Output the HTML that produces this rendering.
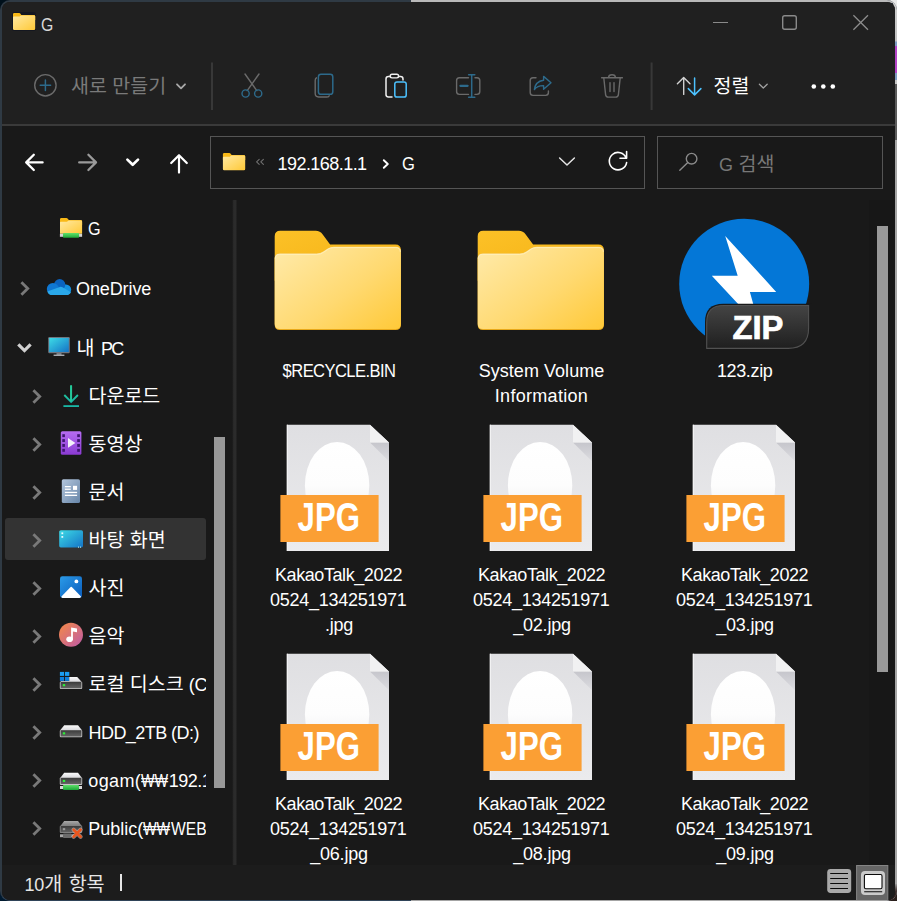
<!DOCTYPE html>
<html lang="ko">
<head>
<meta charset="utf-8">
<title>G</title>
<style>
*{box-sizing:border-box;margin:0;padding:0}
html,body{width:897px;height:901px;overflow:hidden;background:#00101b}
body{font-family:"Liberation Sans","Noto Sans CJK KR",sans-serif;color:#fff;position:relative}
.abs{position:absolute}
/* backdrop pieces (things behind the window) */
.cn{width:12px;height:12px}
#c-tl{left:0;top:0;background:#00101b}
#c-tr{right:0;top:0;background:#e8e8e8}
#c-bl{left:0;bottom:0;background:#001a30}
#c-br{right:0;bottom:0;background:#2a1f1c}
#frame{left:0;top:0;width:897px;height:901px;border-radius:10px;overflow:hidden;background:#2f3a44}
#f-top{left:411px;top:0;width:486px;height:3px;background:#b9b9b9}
#f-right{left:893px;top:0;width:4px;height:901px;background:linear-gradient(#d0d0d0 0,#c2c2c2 41px,#7f9cc4 42px,#7f9cc4 46px,#b545c8 46px,#b545c8 73px,#7f9cc4 73px,#7f9cc4 80px,#c8c8c8 80px,#c8c8c8 84px,#5c5c5c 84px,#5c5c5c 140px,#a6a6a6 140px)}
#f-bot{left:0;top:897px;width:411px;height:4px;background:#2f4358}
#f-bot2{left:411px;top:897px;width:486px;height:4px;background:#a4a4a4}
#f-brc{left:889px;top:884px;width:8px;height:17px;background:linear-gradient(#999,#3a2c2a 45%,#2a1a18)}
#win{left:2px;top:2px;width:893px;height:897.9px;background:#191919;border-radius:8px;overflow:hidden}
#head{left:0;top:0;width:893px;height:122px;background:#202020}
#headline{left:0;top:122px;width:893px;height:2px;background:#3a3a3a}
.t{white-space:nowrap;line-height:1}
.fl{font-size:18px;line-height:25px;height:25px;width:220px;text-align:center;color:#fff}
.nl{font-size:18px;line-height:24px;height:24px;color:#fff}
.k{font-size:19.5px}

</style>
</head>
<body>
<div class="abs cn" id="c-tl"></div><div class="abs cn" id="c-tr"></div><div class="abs cn" id="c-bl"></div><div class="abs cn" id="c-br"></div>
<div class="abs" id="frame">
  <div class="abs" id="f-top"></div>
  <div class="abs" id="f-right"></div>
  <div class="abs" id="f-bot"></div>
  <div class="abs" id="f-bot2"></div>
  <div class="abs" id="f-brc"></div>
</div>
<div class="abs" id="win">
  <div class="abs" id="head"></div>
  <div class="abs" id="headline"></div>
  <svg class="abs" style="left:10px;top:10px" width="24" height="19" viewBox="0 0 24 19">
    <defs>
      <linearGradient id="fg1" x1="0" y1="0" x2="1" y2="1"><stop offset="0" stop-color="#ffe9a2"/><stop offset="1" stop-color="#ffc937"/></linearGradient>
    </defs>
    <rect x="0" y="0" width="24" height="19" rx="2" fill="#0b1020" opacity=".55"/>
    <path d="M1 2.2 Q1 1 2.2 1 H7.2 Q8 1 8.5 1.8 L9.3 3 H22 Q23.2 3 23.2 4.2 V8 H1 Z" fill="#f9b917"/>
    <path d="M1 5.2 Q1 4.6 1.8 4.6 H7.6 L9 3.4 H22.4 Q23.2 3.4 23.2 4.2 V16.8 Q23.2 18 22 18 H2.2 Q1 18 1 16.8 Z" fill="url(#fg1)"/>
  </svg>
  <div class="abs t" style="left:38.8px;top:14px;font-size:18px;color:#d8d8d8;transform:scaleX(.88);transform-origin:0 50%">G</div>
  <!-- window controls -->
  <svg class="abs" style="left:700px;top:0" width="193" height="46" viewBox="0 0 193 46" fill="none" stroke="#8a8a8a" stroke-width="1.4">
    <path d="M11 20.5 H26" stroke-width="1.15"/>
    <rect x="80.7" y="13.7" width="13.6" height="13.6" rx="2"/>
    <path d="M151.4 13.2 L166 27.8 M166 13.2 L151.4 27.8" stroke-width="1.3"/>
  </svg>

  <!-- toolbar; coordinates are window-relative (abs-2) -->
  <svg class="abs" style="left:0;top:46px" width="893" height="76" viewBox="2 48 893 76" fill="none" stroke-linecap="round" stroke-linejoin="round">
    <!-- new -->
    <circle cx="45.4" cy="85.3" r="10.7" stroke="#6a6a6a" stroke-width="1.4"/>
    <path d="M40.2 85.3 H50.6 M45.4 80.1 V90.5" stroke="#2d6a8b" stroke-width="1.5"/>
    <path d="M177 84.3 L181 88.3 L185 84.3" stroke="#a8a8a8" stroke-width="1.8"/>
    <!-- sep -->
    <path d="M212 62.6 V110" stroke="#383838" stroke-width="2" stroke-linecap="butt"/>
    <!-- cut -->
    <path d="M245 74 L256.8 90.6 M259 74 L247.2 90.6" stroke="#6a6a6a" stroke-width="1.4"/>
    <circle cx="245.6" cy="93.5" r="3.6" stroke="#2d6a8b" stroke-width="1.4"/>
    <circle cx="258.2" cy="93.5" r="3.6" stroke="#2d6a8b" stroke-width="1.4"/>
    <!-- copy -->
    <path d="M316.4 77.8 Q315.2 78.6 315.2 80.4 V93.6 Q315.2 97 318.6 97 H326.6 Q328.4 97 329.2 95.8" stroke="#6a6a6a" stroke-width="1.4"/>
    <rect x="318.4" y="74.3" width="14.4" height="20" rx="2.6" stroke="#2d6a8b" stroke-width="1.5"/>
    <!-- paste -->
    <path d="M390 76.6 H388.4 Q386 76.6 386 79 V94.6 Q386 97 388.4 97 H392 M398.6 76.6 H400.6 Q403 76.6 403 79 V80" stroke="#f0f0f0" stroke-width="1.5"/>
    <rect x="390.2" y="74.3" width="8.4" height="3.6" rx="1.8" stroke="#f0f0f0" stroke-width="1.4"/>
    <rect x="394.8" y="81.9" width="11.4" height="15.2" rx="2.2" stroke="#4cc2ff" stroke-width="1.5"/>
    <!-- rename -->
    <path d="M468.5 77.8 H459.4 Q456.6 77.8 456.6 80.6 V91.6 Q456.6 94.4 459.4 94.4 H468.5 M475 77.8 H477 Q479.8 77.8 479.8 80.6 V91.6 Q479.8 94.4 477 94.4 H475" stroke="#6a6a6a" stroke-width="1.4"/>
    <path d="M471.7 74.8 V97.2 M468.6 74.8 H474.8 M468.6 97.2 H474.8" stroke="#2d6a8b" stroke-width="1.5"/>
    <path d="M460.4 85.8 H467.6" stroke="#2d6a8b" stroke-width="2.2"/>
    <!-- share -->
    <path d="M536 77.8 H533 Q530.2 77.8 530.2 80.6 V92.6 Q530.2 95.4 533 95.4 H545.6 Q548.4 95.4 548.4 92.6 V91" stroke="#6a6a6a" stroke-width="1.4"/>
    <path d="M543.6 76.4 L551 82.8 L543.6 89.2 V85.6 Q537.4 85.4 534.4 89.6 Q535.2 81.4 543.6 80.2 Z" stroke="#2d6a8b" stroke-width="1.4"/>
    <!-- delete -->
    <path d="M601.6 77.7 H622.4 M608.6 77.4 Q608.6 74.7 612 74.7 Q615.4 74.7 615.4 77.4 M603.8 78 L605.6 94.6 Q605.9 97.1 608.4 97.1 H615.6 Q618.1 97.1 618.4 94.6 L620.2 78 M610 82.6 V91.6 M614 82.6 V91.6" stroke="#6a6a6a" stroke-width="1.4"/>
    <!-- sep -->
    <path d="M651.6 62.6 V110" stroke="#383838" stroke-width="2" stroke-linecap="butt"/>
    <!-- sort -->
    <path d="M683.7 94.4 V78 M677.4 83.8 L683.7 77.5 L690 83.8" stroke="#d0d0d0" stroke-width="1.4"/>
    <path d="M694.6 78 V94.4 M688.3 88.6 L694.6 94.9 L700.9 88.6" stroke="#4cc2ff" stroke-width="1.5"/>
    <path d="M759.4 84.2 L763.3 88 L767.2 84.2" stroke="#a0a0a0" stroke-width="1.3"/>
    <!-- more -->
    <g fill="#fff" stroke="none"><circle cx="813.8" cy="86.5" r="2.3"/><circle cx="823.3" cy="86.5" r="2.3"/><circle cx="832.8" cy="86.5" r="2.3"/></g>
  </svg>
  <div class="abs t" style="left:69px;top:74.5px;font-size:19.5px;color:#7a7a7a">새로 만들기</div>
  <div class="abs t" style="left:711.5px;top:74.5px;font-size:19.5px;color:#fff">정렬</div>

  <!-- address row -->
  <div class="abs" style="left:208px;top:134px;width:435px;height:53px;border:1px solid #555"></div>
  <div class="abs" style="left:655px;top:134px;width:226px;height:53px;border:1px solid #555"></div>
  <svg class="abs" style="left:0;top:124px" width="893" height="74" viewBox="2 126 893 74" fill="none" stroke-linecap="round" stroke-linejoin="round">
    <defs><linearGradient id="fg2" x1="0" y1="0" x2="1" y2="1"><stop offset="0" stop-color="#ffe9a2"/><stop offset="1" stop-color="#ffc937"/></linearGradient></defs>
    <path d="M26.4 162.4 H42.6 M33.8 154.8 L26.2 162.4 L33.8 170" stroke="#fff" stroke-width="2.3"/>
    <path d="M79.2 162.4 H95.6 M88.4 154.8 L96 162.4 L88.4 170" stroke="#9a9a9a" stroke-width="2.3"/>
    <path d="M127.4 159.6 L132.7 164.8 L138 159.6" stroke="#fff" stroke-width="2.7"/>
    <path d="M179 172.6 V155.4 M171.2 163 L179 155.2 L186.8 163" stroke="#fff" stroke-width="2.2"/>
    <!-- folder -->
    <path d="M222.9 154.3 Q222.9 152.9 224.3 152.9 H229.3 Q230.1 152.9 230.7 153.7 L231.6 155 H243.9 Q245.2 155 245.2 156.3 V160 H222.9 Z" fill="#f9b917"/>
    <path d="M222.9 157.6 Q222.9 156.8 223.7 156.8 H229.8 L231.3 155.5 H244.3 Q245.2 155.5 245.2 156.4 V168.9 Q245.2 170.2 243.9 170.2 H224.2 Q222.9 170.2 222.9 168.9 Z" fill="url(#fg2)"/>
    <!-- « -->
    <path d="M259.2 159.3 L256.6 161.8 L259.2 164.3 M263.4 159.3 L260.8 161.8 L263.4 164.3" stroke="#707070" stroke-width="1.1"/>
    <!-- › -->
    <path d="M383.8 160.2 L387.8 164 L383.8 167.8" stroke="#fff" stroke-width="1.9"/>
    <!-- dropdown -->
    <path d="M559.6 158 L567 165 L574.4 158" stroke="#e4e4e4" stroke-width="1.5"/>
    <!-- refresh -->
    <path d="M626.2 158.2 A8.7 8.7 0 1 0 626.6 162.6 M626.6 151.6 V158.2 H620" stroke="#fff" stroke-width="1.6"/>
    <!-- search -->
    <circle cx="691.6" cy="158.7" r="5.3" stroke="#8a8a8a" stroke-width="1.4"/>
    <path d="M687.8 162.5 L679.8 170.2" stroke="#8a8a8a" stroke-width="1.4"/>
  </svg>
  <div class="abs t" style="left:275.5px;top:153px;font-size:18px;color:#fff;letter-spacing:-0.55px">192.168.1.1</div>
  <div class="abs t" style="left:400px;top:153px;font-size:18px;color:#fff;transform:scaleX(.92);transform-origin:0 50%">G</div>
  <div class="abs t" style="left:717px;top:153px;font-size:18px;color:#777"><span style="letter-spacing:-1px">G</span><span style="font-size:19.5px;margin-left:6.5px">검색</span></div>

  <!-- nav pane -->
<div class="abs" style="left:3.3px;top:516.2px;width:200.8px;height:41.4px;background:#333;border-radius:3px"></div>
<div class="abs" style="left:212.3px;top:434.6px;width:10.6px;height:351.2px;background:#989898"></div>
<div class="abs" style="left:230.1px;top:198px;width:5.2px;height:665px;background:linear-gradient(to right,#171717,#2b2b2b 35%,#2b2b2b 70%,#1d1d1d)"></div>
<svg class="abs" style="left:0;top:198px" width="232" height="665" viewBox="2 200 232 665">
<defs>
<linearGradient id="nfg" x1="0" y1="0" x2="1" y2="1"><stop offset="0" stop-color="#ffe9a2"/><stop offset="1" stop-color="#ffc937"/></linearGradient>
<linearGradient id="gcy" x1="0" y1="0" x2="1" y2="1"><stop offset="0" stop-color="#3ddbe6"/><stop offset="1" stop-color="#1473c6"/></linearGradient>
<linearGradient id="gdl" x1="0" y1="0" x2="0" y2="1"><stop offset="0" stop-color="#2ad08c"/><stop offset="1" stop-color="#19b6a8"/></linearGradient>
<linearGradient id="gvid" x1="0" y1="0" x2="0" y2="1"><stop offset="0" stop-color="#b66cf2"/><stop offset="1" stop-color="#8a3ad2"/></linearGradient>
<linearGradient id="gdoc" x1="0" y1="0" x2="1" y2="1"><stop offset="0" stop-color="#b4c6dc"/><stop offset="1" stop-color="#6685a8"/></linearGradient>
<linearGradient id="gph" x1="0" y1="0" x2="1" y2="1"><stop offset="0" stop-color="#2b9be8"/><stop offset="1" stop-color="#0a5cbc"/></linearGradient>
<linearGradient id="gmu" x1="0" y1="0" x2="1" y2="1"><stop offset="0" stop-color="#f58a45"/><stop offset="1" stop-color="#bd5aa8"/></linearGradient>
<linearGradient id="gdrvT" x1="0" y1="0" x2="0" y2="1"><stop offset="0" stop-color="#fafafa"/><stop offset="1" stop-color="#dadade"/></linearGradient>
<linearGradient id="gdrvF" x1="0" y1="0" x2="0" y2="1"><stop offset="0" stop-color="#3c3c3c"/><stop offset="1" stop-color="#646464"/></linearGradient>
<linearGradient id="gdrvT2" x1="0" y1="0" x2="0" y2="1"><stop offset="0" stop-color="#a8a8a8"/><stop offset="1" stop-color="#7c7c7c"/></linearGradient>
<linearGradient id="ggr" x1="0" y1="0" x2="0" y2="1"><stop offset="0" stop-color="#5fe06a"/><stop offset="1" stop-color="#1fa83a"/></linearGradient>
<linearGradient id="god1" x1="0" y1="0" x2="1" y2="1"><stop offset="0" stop-color="#0f6cbd"/><stop offset="1" stop-color="#0a4f9c"/></linearGradient>
</defs>
<path d="M60 219.3 Q60 217.9 61.4 217.9 H66.4 Q67.2 217.9 67.8 218.7 L68.8 220 H80.8 Q82.1 220 82.1 221.4 V225 H60 Z" fill="#f9b917"/>
<path d="M60 222.6 Q60 221.8 60.8 221.8 H67 L68.6 220.5 H81.2 Q82.1 220.5 82.1 221.5 V233.8 H60 Z" fill="url(#nfg)"/>
<rect x="59.9" y="233.8" width="22.2" height="3" fill="#d4d4d4"/><rect x="63" y="233.1" width="16.1" height="4.7" rx="0.8" fill="url(#ggr)"/>
<path d="M21.40 282.30 L27.70 288.50 L21.40 294.70" stroke="#797979" stroke-width="2.8" fill="none"/>
<path d="M57 284.6 H66 A5.2 5.2 0 0 1 66 295 H57 Z" fill="#1490df"/>
<circle cx="59.7" cy="284.6" r="5.6" fill="#0a63c0"/>
<circle cx="52.9" cy="289" r="6.1" fill="#0f78d4"/>
<path d="M47.3 291.4 L59.8 286.9 Q61.2 286.4 62.5 287.2 L70.9 292.2 Q69.8 295 66.4 295 H52.4 Q48.4 295 47.3 291.4 Z" fill="#2aa8ea"/>
<path d="M18.30 344.40 L24.45 350.60 L30.60 344.40" stroke="#d0d0d0" stroke-width="3.2" fill="none"/>
<rect x="48.2" y="337" width="21.6" height="16.2" rx="1.2" fill="#6f7680"/><rect x="49.2" y="338" width="19.6" height="14" fill="url(#gcy)"/><rect x="56.5" y="353.2" width="5" height="1.6" fill="#8b9197"/><rect x="53.6" y="354.6" width="10.8" height="1.3" fill="#b5bac0"/>
<path d="M33.40 390.30 L39.70 396.50 L33.40 402.70" stroke="#797979" stroke-width="2.8" fill="none"/>
<path d="M71.1 385.4 V401.6 M64.3 395 L71.1 401.8 L77.9 395" stroke="url(#gdl)" stroke-width="1.9" fill="none"/><path d="M71.1 385.4 V401.6" stroke="#24c89a" stroke-width="1.9"/><rect x="63.4" y="405.2" width="15.6" height="1.8" fill="#19b8a6"/>
<path d="M33.40 438.30 L39.70 444.50 L33.40 450.70" stroke="#797979" stroke-width="2.8" fill="none"/>
<rect x="60.8" y="431.2" width="20.6" height="23.6" rx="1.6" fill="url(#gvid)"/>
<rect x="62.3" y="434.2" width="2.6" height="2.9" fill="#3f1670"/><rect x="77.2" y="434.2" width="2.7" height="2.9" fill="#3f1670"/>
<rect x="62.3" y="439.1" width="2.6" height="2.9" fill="#3f1670"/><rect x="77.2" y="439.1" width="2.7" height="2.9" fill="#3f1670"/>
<rect x="62.3" y="444.0" width="2.6" height="2.9" fill="#3f1670"/><rect x="77.2" y="444.0" width="2.7" height="2.9" fill="#3f1670"/>
<rect x="62.3" y="448.9" width="2.6" height="2.9" fill="#3f1670"/><rect x="77.2" y="448.9" width="2.7" height="2.9" fill="#3f1670"/>
<path d="M68 438 L75.4 442.9 L68 447.8 Z" fill="#f4f0fa"/>
<path d="M33.40 486.30 L39.70 492.50 L33.40 498.70" stroke="#797979" stroke-width="2.8" fill="none"/>
<rect x="61.8" y="479.2" width="18.2" height="23.8" rx="1.6" fill="url(#gdoc)"/><rect x="64.9" y="486" width="5.9" height="1.3" fill="#fff"/><rect x="64.9" y="488.6" width="5.9" height="1.3" fill="#fff"/><rect x="64.9" y="491.8" width="12.2" height="1.3" fill="#fff"/><rect x="64.9" y="494.7" width="12.2" height="1.3" fill="#fff"/><rect x="73" y="485.8" width="4.1" height="4.1" fill="#fff"/>
<path d="M33.40 534.30 L39.70 540.50 L33.40 546.70" stroke="#797979" stroke-width="2.8" fill="none"/>
<rect x="59.2" y="530.2" width="23.8" height="17.2" rx="1.6" fill="url(#gcy)"/><rect x="61.4" y="532.4" width="1.8" height="1.8" fill="#e8fbff"/><rect x="61.4" y="536" width="1.8" height="1.8" fill="#e8fbff"/><rect x="78" y="546.6" width="1" height="1" fill="#cfe"/><rect x="80" y="546.6" width="1" height="1" fill="#cfe"/>
<path d="M33.40 582.30 L39.70 588.50 L33.40 594.70" stroke="#797979" stroke-width="2.8" fill="none"/>
<rect x="60" y="576.2" width="22" height="21.8" rx="2.4" fill="url(#gph)"/><path d="M61.4 596.4 L70.6 587 Q71.2 586.4 71.8 587 L81 596.4 Q80.6 598 79.4 598 H62.6 Q61.6 598 61.4 596.4 Z" fill="#fff"/><circle cx="76.4" cy="581.4" r="1.9" fill="#fff"/>
<path d="M33.40 630.30 L39.70 636.50 L33.40 642.70" stroke="#797979" stroke-width="2.8" fill="none"/>
<circle cx="71" cy="634.8" r="12" fill="url(#gmu)"/><path d="M71.1 627.6 L77 628.4 V632.2 L72.9 631.4 V639.6 H71.1 Z" fill="#fff"/><ellipse cx="69.6" cy="639.3" rx="3.3" ry="2.8" fill="#fff"/>
<path d="M33.40 678.30 L39.70 684.50 L33.40 690.70" stroke="#797979" stroke-width="2.8" fill="none"/>
<rect x="59.9" y="671.9" width="4.2" height="4" fill="#1b9df2"/><rect x="65" y="671.9" width="4.3" height="4" fill="#1b9df2"/><rect x="59.9" y="677" width="4.2" height="3.9" fill="#0f7fdc"/><rect x="65" y="677" width="4.3" height="3.9" fill="#0f7fdc"/><path d="M69.3 677 H77.2 L81.6 681.8 H60.4 L61 680.9 H69.3 Z" fill="url(#gdrvT)"/><rect x="59.8" y="681.7" width="22.4" height="7.4" rx="1" fill="#c4c4c4"/><rect x="60.6" y="682.1" width="20.8" height="6.2" rx="0.5" fill="url(#gdrvF)"/><rect x="62.8" y="684.1" width="2.4" height="2.1" fill="#2ef03a"/>
<path d="M33.40 726.30 L39.70 732.50 L33.40 738.70" stroke="#797979" stroke-width="2.8" fill="none"/>
<path d="M64.2 725.2 H78 L81.8 730.1 H60.4 Z" fill="url(#gdrvT)"/><rect x="59.8" y="729.9000000000001" width="22.4" height="7.4" rx="1" fill="#c4c4c4"/><rect x="60.6" y="730.3000000000001" width="20.8" height="6.2" rx="0.5" fill="url(#gdrvF)"/><rect x="62.8" y="732.3000000000001" width="2.4" height="2.1" fill="#2ef03a"/>
<path d="M33.40 774.30 L39.70 780.50 L33.40 786.70" stroke="#797979" stroke-width="2.8" fill="none"/>
<path d="M64.2 772.8 H78 L81.8 777.6999999999999 H60.4 Z" fill="url(#gdrvT)"/><rect x="59.8" y="777.5" width="22.4" height="7.4" rx="1" fill="#c4c4c4"/><rect x="60.6" y="777.9" width="20.8" height="6.2" rx="0.5" fill="url(#gdrvF)"/><rect x="62.8" y="779.9" width="2.4" height="2.1" fill="#2ef03a"/>
<rect x="60" y="786" width="22" height="3" fill="#d6d6d6"/><rect x="63" y="785" width="16" height="4.9" rx="0.8" fill="url(#ggr)"/>
<path d="M33.40 822.30 L39.70 828.50 L33.40 834.70" stroke="#797979" stroke-width="2.8" fill="none"/>
<path d="M64.2 821 H78 L81.8 825.9 H60.4 Z" fill="url(#gdrvT2)"/><rect x="59.8" y="825.7" width="22.4" height="7.4" rx="1" fill="#8a8a8a"/><rect x="60.6" y="826.1" width="20.8" height="6.2" rx="0.5" fill="url(#gdrvF)"/><rect x="62.8" y="828.1" width="2.4" height="2.1" fill="#9a9a9a"/>
<rect x="60" y="834.3" width="14" height="2.9" fill="#a8a8a8"/><rect x="63" y="833.4" width="8.6" height="4.5" rx="0.8" fill="#6c6c6c"/>
<path d="M73.6 829.8 L80.6 836.8 M80.6 829.8 L73.6 836.8" stroke="#d8d0cc" stroke-width="4.2" fill="none" stroke-linecap="round" opacity=".55"/>
<path d="M73.6 829.8 L80.6 836.8 M80.6 829.8 L73.6 836.8" stroke="#e8561e" stroke-width="2.7" fill="none" stroke-linecap="round"/>
</svg>
<div class="abs t nl" style="left:85.6px;top:215.3px;transform:scaleX(.9);transform-origin:0 50%">G</div>
<div class="abs t nl" style="left:74px;top:274.7px;letter-spacing:-0.1px">OneDrive</div>
<div class="abs t nl" style="left:74.5px;top:333.6px;"><span class="k">내</span> <span style="letter-spacing:-1.7px;margin-left:1.6px">PC</span></div>
<div class="abs t nl" style="left:86.5px;top:382.3px;"><span class="k">다운로드</span></div>
<div class="abs t nl" style="left:86.5px;top:430.3px;"><span class="k">동영상</span></div>
<div class="abs t nl" style="left:86.5px;top:478.3px;"><span class="k">문서</span></div>
<div class="abs t nl" style="left:86.5px;top:526px;"><span class="k">바탕 화면</span></div>
<div class="abs t nl" style="left:86.5px;top:574px;"><span class="k">사진</span></div>
<div class="abs t nl" style="left:86.5px;top:622px;"><span class="k">음악</span></div>
<div class="abs t nl" style="left:86.5px;top:670.3px;width:117.5px;overflow:hidden"><span class="k">로컬 디스크</span> (C:)</div>
<div class="abs t nl" style="left:86.5px;top:719.3px;letter-spacing:-0.55px">HDD_2TB (D:)</div>
<div class="abs t nl" style="left:86.3px;top:767.3px;width:117.7px;overflow:hidden"><span style="letter-spacing:0.35px">ogam(</span><span style="display:inline-block;width:27.6px;letter-spacing:0;transform:scaleX(.8);transform-origin:0 50%">₩₩</span><span style="letter-spacing:-0.5px">192.168.1.1</span></div>
<div class="abs t nl" style="left:86.3px;top:815.3px;width:117.7px;overflow:hidden"><span style="letter-spacing:0px">Public(</span><span style="display:inline-block;width:27.6px;letter-spacing:0;transform:scaleX(.8);transform-origin:0 50%">₩₩</span><span style="display:inline-block;transform:scaleX(.87);transform-origin:0 50%">WEB</span></div>
  <!-- main pane -->
<div class="abs" style="left:867px;top:198px;width:26px;height:665px;background:#171717"></div>
<div class="abs" style="left:875px;top:224px;width:11.2px;height:446px;background:#999"></div>
<svg class="abs" style="left:272px;top:228px" width="128" height="101" viewBox="0 0 128 101"><g transform="translate(0.70 0.80)">
<defs><linearGradient id="ff274" x1="0" y1="0.1" x2="1" y2="1"><stop offset="0" stop-color="#ffe9a6"/><stop offset=".55" stop-color="#ffd970"/><stop offset="1" stop-color="#ffc938"/></linearGradient>
<linearGradient id="fb274" x1="0" y1="0" x2="1" y2="1"><stop offset="0" stop-color="#fcc127"/><stop offset="1" stop-color="#f3b013"/></linearGradient></defs>
<path d="M0 5.5 Q0 0 5.5 0 H41 Q45.4 0 48 3.6 L55.4 13.6 H120.6 Q126.2 13.6 126.2 19.2 V50 H0 Z" fill="url(#fb274)"/>
<path d="M0 28 Q0 22.8 5 22.8 H42 Q45.6 22.8 48.4 20.8 L53 17.6 Q55.6 16 59 16 H121.2 Q126.2 16 126.2 21 V94 Q126.2 99.2 121 99.2 H5.2 Q0 99.2 0 94 Z" fill="#e9a91a"/>
<path d="M0 28 Q0 22.8 5 22.8 H42 Q45.6 22.8 48.4 20.8 L53 17.6 Q55.6 16 59 16 H121.2 Q126.2 16 126.2 21 V93 Q126.2 98.2 121 98.2 H5.2 Q0 98.2 0 93 Z" fill="url(#ff274)"/>
<path d="M0.6 28 Q0.6 23.6 5 23.6 H42 Q46 23.6 48.8 21.6 L53.4 18.4 Q55.8 16.8 59 16.8 H121.2 Q125.6 16.8 125.6 21" stroke="#fff2c4" stroke-width="1" fill="none" opacity=".7"/>
</g></svg>
<svg class="abs" style="left:475px;top:228px" width="128" height="101" viewBox="0 0 128 101"><g transform="translate(0.70 0.80)">
<defs><linearGradient id="ff477" x1="0" y1="0.1" x2="1" y2="1"><stop offset="0" stop-color="#ffe9a6"/><stop offset=".55" stop-color="#ffd970"/><stop offset="1" stop-color="#ffc938"/></linearGradient>
<linearGradient id="fb477" x1="0" y1="0" x2="1" y2="1"><stop offset="0" stop-color="#fcc127"/><stop offset="1" stop-color="#f3b013"/></linearGradient></defs>
<path d="M0 5.5 Q0 0 5.5 0 H41 Q45.4 0 48 3.6 L55.4 13.6 H120.6 Q126.2 13.6 126.2 19.2 V50 H0 Z" fill="url(#fb477)"/>
<path d="M0 28 Q0 22.8 5 22.8 H42 Q45.6 22.8 48.4 20.8 L53 17.6 Q55.6 16 59 16 H121.2 Q126.2 16 126.2 21 V94 Q126.2 99.2 121 99.2 H5.2 Q0 99.2 0 94 Z" fill="#e9a91a"/>
<path d="M0 28 Q0 22.8 5 22.8 H42 Q45.6 22.8 48.4 20.8 L53 17.6 Q55.6 16 59 16 H121.2 Q126.2 16 126.2 21 V93 Q126.2 98.2 121 98.2 H5.2 Q0 98.2 0 93 Z" fill="url(#ff477)"/>
<path d="M0.6 28 Q0.6 23.6 5 23.6 H42 Q46 23.6 48.8 21.6 L53.4 18.4 Q55.8 16.8 59 16.8 H121.2 Q125.6 16.8 125.6 21" stroke="#fff2c4" stroke-width="1" fill="none" opacity=".7"/>
</g></svg>
<svg class="abs" style="left:674px;top:212px" width="138" height="140" viewBox="676 214 138 140">
<defs><linearGradient id="zl" x1="0" y1="0" x2="0" y2="1"><stop offset="0" stop-color="#444"/><stop offset="1" stop-color="#1f1f1f"/></linearGradient></defs>
<circle cx="744.2" cy="283.7" r="65" fill="#0477d7"/>
<path d="M725.2 235.9 L776.2 291.9 H749.9 L756 314 L740 306 L711.8 275.7 H737.7 Z" fill="#fff"/>
<path d="M705 352 V322 Q705 303.8 723.2 303.8 H812 V352 Z" fill="#191919"/>
<path d="M706.7 348.4 V322.4 Q706.7 305.5 723.6 305.5 H808.6 V328 Q808.6 348.4 788.2 348.4 Z" fill="url(#zl)" stroke="#515151" stroke-width="1.1"/>
<text x="757.9" y="339.1" text-anchor="middle" font-family="'Liberation Sans',sans-serif" font-weight="bold" font-size="33.4" fill="#fff" stroke="#fff" stroke-width="0.7" textLength="51" lengthAdjust="spacingAndGlyphs">ZIP</text>
</svg>
<svg class="abs" style="left:278px;top:422px" width="111" height="129" viewBox="0 0 111 129"><g transform="translate(0.40 0.70)">
<defs><linearGradient id="pg1" x1="0" y1="0" x2="0" y2="1"><stop offset="0" stop-color="#dfdfe2"/><stop offset="1" stop-color="#ebebed"/></linearGradient>
<linearGradient id="eg1" x1="0" y1="0" x2="0" y2="1"><stop offset="0" stop-color="#fff"/><stop offset=".5" stop-color="#fdfdfd"/><stop offset="1" stop-color="#e9e9ea"/></linearGradient>
<linearGradient id="sh1" x1="0" y1="0" x2="0" y2="1"><stop offset="0" stop-color="#c6c6cc"/><stop offset="1" stop-color="#dcdce0"/></linearGradient></defs>
<path d="M6.4 0 H89.6 L108.6 17.9 V126.3 H6.4 Z" fill="url(#pg1)"/>
<path d="M6.4 0 H7.6 V126.3 H6.4 Z" fill="#f2f2f3"/>
<path d="M89.6 17.9 H108.6 V36.6 Z" fill="url(#sh1)"/>
<path d="M89.6 0 L108.6 17.9 H89.6 Z" fill="#f1f1f2"/>
<ellipse cx="56.7" cy="60.6" rx="32.2" ry="43.4" fill="url(#eg1)"/>
<rect x="0" y="70.3" width="98.2" height="47" fill="#fb9f34"/>
<text x="48.4" y="106.5" text-anchor="middle" font-family="'Liberation Sans',sans-serif" font-weight="bold" font-size="40.6" fill="#fff" textLength="62.4" lengthAdjust="spacingAndGlyphs">JPG</text>
</g></svg>
<svg class="abs" style="left:481px;top:422px" width="111" height="129" viewBox="0 0 111 129"><g transform="translate(0.40 0.70)">
<defs><linearGradient id="pg2" x1="0" y1="0" x2="0" y2="1"><stop offset="0" stop-color="#dfdfe2"/><stop offset="1" stop-color="#ebebed"/></linearGradient>
<linearGradient id="eg2" x1="0" y1="0" x2="0" y2="1"><stop offset="0" stop-color="#fff"/><stop offset=".5" stop-color="#fdfdfd"/><stop offset="1" stop-color="#e9e9ea"/></linearGradient>
<linearGradient id="sh2" x1="0" y1="0" x2="0" y2="1"><stop offset="0" stop-color="#c6c6cc"/><stop offset="1" stop-color="#dcdce0"/></linearGradient></defs>
<path d="M6.4 0 H89.6 L108.6 17.9 V126.3 H6.4 Z" fill="url(#pg2)"/>
<path d="M6.4 0 H7.6 V126.3 H6.4 Z" fill="#f2f2f3"/>
<path d="M89.6 17.9 H108.6 V36.6 Z" fill="url(#sh2)"/>
<path d="M89.6 0 L108.6 17.9 H89.6 Z" fill="#f1f1f2"/>
<ellipse cx="56.7" cy="60.6" rx="32.2" ry="43.4" fill="url(#eg2)"/>
<rect x="0" y="70.3" width="98.2" height="47" fill="#fb9f34"/>
<text x="48.4" y="106.5" text-anchor="middle" font-family="'Liberation Sans',sans-serif" font-weight="bold" font-size="40.6" fill="#fff" textLength="62.4" lengthAdjust="spacingAndGlyphs">JPG</text>
</g></svg>
<svg class="abs" style="left:684px;top:422px" width="111" height="129" viewBox="0 0 111 129"><g transform="translate(0.40 0.70)">
<defs><linearGradient id="pg3" x1="0" y1="0" x2="0" y2="1"><stop offset="0" stop-color="#dfdfe2"/><stop offset="1" stop-color="#ebebed"/></linearGradient>
<linearGradient id="eg3" x1="0" y1="0" x2="0" y2="1"><stop offset="0" stop-color="#fff"/><stop offset=".5" stop-color="#fdfdfd"/><stop offset="1" stop-color="#e9e9ea"/></linearGradient>
<linearGradient id="sh3" x1="0" y1="0" x2="0" y2="1"><stop offset="0" stop-color="#c6c6cc"/><stop offset="1" stop-color="#dcdce0"/></linearGradient></defs>
<path d="M6.4 0 H89.6 L108.6 17.9 V126.3 H6.4 Z" fill="url(#pg3)"/>
<path d="M6.4 0 H7.6 V126.3 H6.4 Z" fill="#f2f2f3"/>
<path d="M89.6 17.9 H108.6 V36.6 Z" fill="url(#sh3)"/>
<path d="M89.6 0 L108.6 17.9 H89.6 Z" fill="#f1f1f2"/>
<ellipse cx="56.7" cy="60.6" rx="32.2" ry="43.4" fill="url(#eg3)"/>
<rect x="0" y="70.3" width="98.2" height="47" fill="#fb9f34"/>
<text x="48.4" y="106.5" text-anchor="middle" font-family="'Liberation Sans',sans-serif" font-weight="bold" font-size="40.6" fill="#fff" textLength="62.4" lengthAdjust="spacingAndGlyphs">JPG</text>
</g></svg>
<svg class="abs" style="left:278px;top:651px" width="111" height="129" viewBox="0 0 111 129"><g transform="translate(0.40 0.70)">
<defs><linearGradient id="pg4" x1="0" y1="0" x2="0" y2="1"><stop offset="0" stop-color="#dfdfe2"/><stop offset="1" stop-color="#ebebed"/></linearGradient>
<linearGradient id="eg4" x1="0" y1="0" x2="0" y2="1"><stop offset="0" stop-color="#fff"/><stop offset=".5" stop-color="#fdfdfd"/><stop offset="1" stop-color="#e9e9ea"/></linearGradient>
<linearGradient id="sh4" x1="0" y1="0" x2="0" y2="1"><stop offset="0" stop-color="#c6c6cc"/><stop offset="1" stop-color="#dcdce0"/></linearGradient></defs>
<path d="M6.4 0 H89.6 L108.6 17.9 V126.3 H6.4 Z" fill="url(#pg4)"/>
<path d="M6.4 0 H7.6 V126.3 H6.4 Z" fill="#f2f2f3"/>
<path d="M89.6 17.9 H108.6 V36.6 Z" fill="url(#sh4)"/>
<path d="M89.6 0 L108.6 17.9 H89.6 Z" fill="#f1f1f2"/>
<ellipse cx="56.7" cy="60.6" rx="32.2" ry="43.4" fill="url(#eg4)"/>
<rect x="0" y="70.3" width="98.2" height="47" fill="#fb9f34"/>
<text x="48.4" y="106.5" text-anchor="middle" font-family="'Liberation Sans',sans-serif" font-weight="bold" font-size="40.6" fill="#fff" textLength="62.4" lengthAdjust="spacingAndGlyphs">JPG</text>
</g></svg>
<svg class="abs" style="left:481px;top:651px" width="111" height="129" viewBox="0 0 111 129"><g transform="translate(0.40 0.70)">
<defs><linearGradient id="pg5" x1="0" y1="0" x2="0" y2="1"><stop offset="0" stop-color="#dfdfe2"/><stop offset="1" stop-color="#ebebed"/></linearGradient>
<linearGradient id="eg5" x1="0" y1="0" x2="0" y2="1"><stop offset="0" stop-color="#fff"/><stop offset=".5" stop-color="#fdfdfd"/><stop offset="1" stop-color="#e9e9ea"/></linearGradient>
<linearGradient id="sh5" x1="0" y1="0" x2="0" y2="1"><stop offset="0" stop-color="#c6c6cc"/><stop offset="1" stop-color="#dcdce0"/></linearGradient></defs>
<path d="M6.4 0 H89.6 L108.6 17.9 V126.3 H6.4 Z" fill="url(#pg5)"/>
<path d="M6.4 0 H7.6 V126.3 H6.4 Z" fill="#f2f2f3"/>
<path d="M89.6 17.9 H108.6 V36.6 Z" fill="url(#sh5)"/>
<path d="M89.6 0 L108.6 17.9 H89.6 Z" fill="#f1f1f2"/>
<ellipse cx="56.7" cy="60.6" rx="32.2" ry="43.4" fill="url(#eg5)"/>
<rect x="0" y="70.3" width="98.2" height="47" fill="#fb9f34"/>
<text x="48.4" y="106.5" text-anchor="middle" font-family="'Liberation Sans',sans-serif" font-weight="bold" font-size="40.6" fill="#fff" textLength="62.4" lengthAdjust="spacingAndGlyphs">JPG</text>
</g></svg>
<svg class="abs" style="left:684px;top:651px" width="111" height="129" viewBox="0 0 111 129"><g transform="translate(0.40 0.70)">
<defs><linearGradient id="pg6" x1="0" y1="0" x2="0" y2="1"><stop offset="0" stop-color="#dfdfe2"/><stop offset="1" stop-color="#ebebed"/></linearGradient>
<linearGradient id="eg6" x1="0" y1="0" x2="0" y2="1"><stop offset="0" stop-color="#fff"/><stop offset=".5" stop-color="#fdfdfd"/><stop offset="1" stop-color="#e9e9ea"/></linearGradient>
<linearGradient id="sh6" x1="0" y1="0" x2="0" y2="1"><stop offset="0" stop-color="#c6c6cc"/><stop offset="1" stop-color="#dcdce0"/></linearGradient></defs>
<path d="M6.4 0 H89.6 L108.6 17.9 V126.3 H6.4 Z" fill="url(#pg6)"/>
<path d="M6.4 0 H7.6 V126.3 H6.4 Z" fill="#f2f2f3"/>
<path d="M89.6 17.9 H108.6 V36.6 Z" fill="url(#sh6)"/>
<path d="M89.6 0 L108.6 17.9 H89.6 Z" fill="#f1f1f2"/>
<ellipse cx="56.7" cy="60.6" rx="32.2" ry="43.4" fill="url(#eg6)"/>
<rect x="0" y="70.3" width="98.2" height="47" fill="#fb9f34"/>
<text x="48.4" y="106.5" text-anchor="middle" font-family="'Liberation Sans',sans-serif" font-weight="bold" font-size="40.6" fill="#fff" textLength="62.4" lengthAdjust="spacingAndGlyphs">JPG</text>
</g></svg>
<div class="abs t fl" style="left:227.3px;top:357.00px;letter-spacing:-0.6px;transform:scaleX(.918)">$RECYCLE.BIN</div>
<div class="abs t fl" style="left:429.5px;top:357.00px;letter-spacing:0.04px;">System Volume</div>
<div class="abs t fl" style="left:429.5px;top:382.00px;letter-spacing:0.3px;">Information</div>
<div class="abs t fl" style="left:632.7px;top:357.00px;letter-spacing:-0.35px;">123.zip</div>
<div class="abs t fl" style="left:226.6px;top:561.00px;letter-spacing:-0.42px;">KakaoTalk_2022</div>
<div class="abs t fl" style="left:226.2px;top:586.00px;letter-spacing:-0.26px;">0524_134251971</div>
<div class="abs t fl" style="left:227.0px;top:611.00px;letter-spacing:-0.2px;">.jpg</div>
<div class="abs t fl" style="left:429.6px;top:561.00px;letter-spacing:-0.42px;">KakaoTalk_2022</div>
<div class="abs t fl" style="left:429.2px;top:586.00px;letter-spacing:-0.26px;">0524_134251971</div>
<div class="abs t fl" style="left:430.0px;top:611.00px;letter-spacing:-0.2px;">_02.jpg</div>
<div class="abs t fl" style="left:632.6px;top:561.00px;letter-spacing:-0.42px;">KakaoTalk_2022</div>
<div class="abs t fl" style="left:632.2px;top:586.00px;letter-spacing:-0.26px;">0524_134251971</div>
<div class="abs t fl" style="left:633.0px;top:611.00px;letter-spacing:-0.2px;">_03.jpg</div>
<div class="abs t fl" style="left:226.6px;top:790.00px;letter-spacing:-0.42px;">KakaoTalk_2022</div>
<div class="abs t fl" style="left:226.2px;top:815.00px;letter-spacing:-0.26px;">0524_134251971</div>
<div class="abs t fl" style="left:227.0px;top:840.00px;letter-spacing:-0.2px;">_06.jpg</div>
<div class="abs t fl" style="left:429.6px;top:790.00px;letter-spacing:-0.42px;">KakaoTalk_2022</div>
<div class="abs t fl" style="left:429.2px;top:815.00px;letter-spacing:-0.26px;">0524_134251971</div>
<div class="abs t fl" style="left:430.0px;top:840.00px;letter-spacing:-0.2px;">_08.jpg</div>
<div class="abs t fl" style="left:632.6px;top:790.00px;letter-spacing:-0.42px;">KakaoTalk_2022</div>
<div class="abs t fl" style="left:632.2px;top:815.00px;letter-spacing:-0.26px;">0524_134251971</div>
<div class="abs t fl" style="left:633.0px;top:840.00px;letter-spacing:-0.2px;">_09.jpg</div>
  <!-- status bar -->
  <div class="abs" style="left:0;top:863px;width:893px;height:36px;background:#1c1c1c"></div>
  <div class="abs t" style="left:22.5px;top:872.5px;font-size:18px;color:#e6e6e6;letter-spacing:-0.2px;word-spacing:1.5px">10<span style="font-size:19.6px">개 항목</span></div>
  <div class="abs" style="left:118px;top:872.2px;width:2.2px;height:17px;background:#e6e6e6"></div>
  <svg class="abs" style="left:823px;top:863px" width="70" height="36" viewBox="825 865 70 36">
    <rect x="827.2" y="869" width="24" height="24" rx="3.4" fill="#a9a9a9"/>
    <path d="M830.2 873.5 H848 M830.2 878.5 H848 M830.2 883.5 H848 M830.2 888.5 H848" stroke="#0a0a0a" stroke-width="1.1"/>
    <rect x="856.6" y="865.5" width="31.2" height="36" fill="#666" stroke="#858585" stroke-width="1"/>
    <rect x="861" y="870.9" width="24" height="24.2" rx="4" fill="#cbcbcb"/>
    <rect x="864.4" y="874.5" width="17.6" height="14.2" rx="1.4" fill="#fff" stroke="#0a0a0a" stroke-width="1.1"/>
    <path d="M864.2 891.7 H882.2" stroke="#0a0a0a" stroke-width="1.1"/>
  </svg>

</div>
</body>
</html>
